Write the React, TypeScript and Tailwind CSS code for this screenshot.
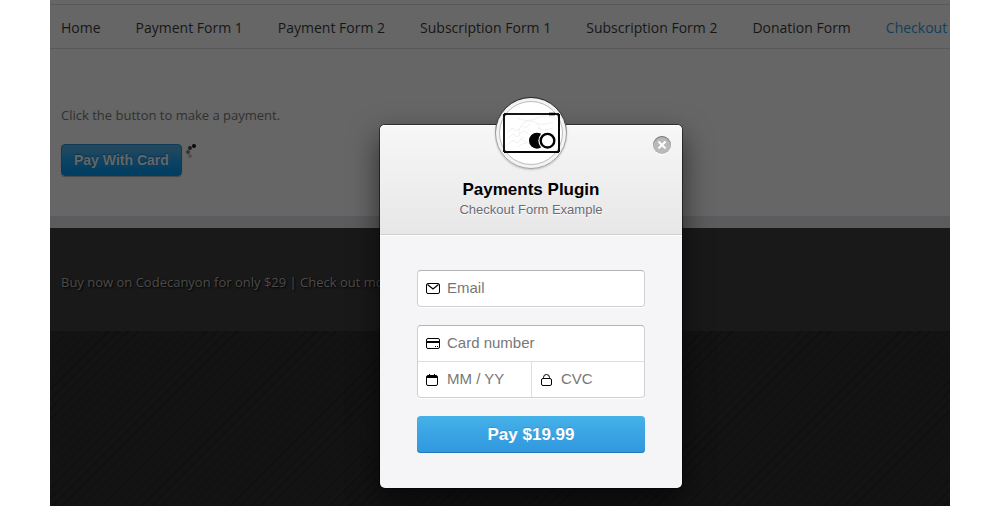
import type { ReactNode } from "react";

const links = [
  "Home",
  "Payment Form 1",
  "Payment Form 2",
  "Subscription Form 1",
  "Subscription Form 2",
  "Donation Form",
  "Checkout",
];

function Spinner() {
  return (
    <svg width="12" height="16" viewBox="0 0 12 16" aria-hidden="true">
      <circle cx="8" cy="2" r="2" fill="#080808" />
      <circle cx="4" cy="4" r="2" fill="#1f1f1f" />
      <circle cx="2" cy="8" r="2" fill="#353535" />
      <circle cx="4" cy="12" r="2" fill="#505050" />
    </svg>
  );
}

function Logo() {
  return (
    <svg width="72" height="72" viewBox="0 0 72 72" className="block" aria-hidden="true">
      <defs>
        <linearGradient id="rim" x1="0" y1="0" x2="0" y2="1">
          <stop offset="0" stopColor="#222" />
          <stop offset="0.35" stopColor="#444" />
          <stop offset="0.5" stopColor="#999" />
          <stop offset="1" stopColor="#a0a0a0" />
        </linearGradient>
        <clipPath id="disc">
          <circle cx="36" cy="36" r="31" />
        </clipPath>
      </defs>
      <circle cx="36" cy="36" r="35.500" fill="#f3f3f3" stroke="url(#rim)" />
      <circle cx="36" cy="36" r="31.500" fill="#fff" stroke="#bdbdbd" />
      <g clipPath="url(#disc)" fill="none">
        <path
          d="M12 36l5-5 4 3 6-5 4 2 5-5M12 42l6-5 4 3 6-6 5 2M12 48l6-5 4 3 7-6M22 21q10 5 20 0t18 1M23 50q4-4 9-4M42 26q6 3 16-1M43 31q6 4 15 0"
          stroke="#f0f0f0"
        />
        <circle cx="35" cy="35" r="11" stroke="#f2f2f2" />
      </g>
      <g fill="none">
        <path d="M9 17h55" stroke="#161616" strokeWidth="2" />
        <path d="M9 55h55" stroke="#050505" strokeWidth="2" />
        <path d="M9 17v38" stroke="#161616" strokeWidth="2" />
        <path d="M64 17v38" stroke="#080808" strokeWidth="2" />
        <path d="M9 17h3l-3 3zM64 17v3l-3-3zM9 55v-3l3 3zM64 55v-3l-3 3z" fill="#111" />
        <path d="M54 17h6" stroke="#000" strokeWidth="2.600" />
        <circle cx="42" cy="43.700" r="8" fill="#000" />
        <circle cx="52.500" cy="43.700" r="9.200" fill="#fff" />
        <circle cx="52.500" cy="43.700" r="6.800" stroke="#000" strokeWidth="2.400" />
      </g>
    </svg>
  );
}

function MailIcon() {
  return (
    <svg width="14" height="12" viewBox="0 0 14 12" fill="none" stroke="#000" aria-hidden="true">
      <rect x="0.500" y="0.500" width="13" height="10" rx="1.500" />
      <path d="M1.500 1.500L7 6l5.500-4.500" strokeWidth="1.200" />
    </svg>
  );
}

function CardIcon() {
  return (
    <svg width="14" height="12" viewBox="0 0 14 12" fill="none" stroke="#000" aria-hidden="true">
      <rect x="0.500" y="0.500" width="13" height="10" rx="1.500" />
      <path d="M0 4h14" strokeWidth="2" />
      <path d="M9 8.500h1M11 8.500h1" />
    </svg>
  );
}

function CalendarIcon() {
  return (
    <svg width="14" height="12" viewBox="0 0 14 12" fill="none" stroke="#000" aria-hidden="true">
      <rect x="0.500" y="1.500" width="11" height="10" rx="1.500" />
      <path d="M1 3h10" strokeWidth="2" />
      <path d="M3.500 0v3M8.500 0v3" />
    </svg>
  );
}

function LockIcon() {
  return (
    <svg width="14" height="12" viewBox="0 0 14 12" fill="none" stroke="#000" aria-hidden="true">
      <rect x="1.500" y="4.500" width="10" height="7" rx="1.500" />
      <path d="M3.500 4.500V3.500a3 3 0 0 1 6 0v1" />
    </svg>
  );
}

function Field({ icon, label, className = "" }: { icon: ReactNode; label: string; className?: string }) {
  return (
    <label className={`flex min-w-0 items-center gap-[7px] pl-2 ${className}`}>
      <span className="shrink-0">{icon}</span>
      <input
        type="text"
        aria-label={label}
        placeholder={label}
        className="w-full min-w-0 bg-transparent pb-0.5 text-[15px] leading-5 text-black outline-none placeholder:text-[#777]"
      />
    </label>
  );
}

function CheckoutDialog() {
  return (
    <section
      role="dialog"
      aria-labelledby="dialog-title"
      className="relative w-[302px] rounded-[5px] bg-[#f5f5f7] pb-[35px] font-['Liberation_Sans',Arial,sans-serif] shadow-[0_0_0_1px_rgba(0,0,0,0.5),0_12px_30px_rgba(0,0,0,0.6)]"
    >
      <div className="absolute -top-7 left-1/2 -translate-x-1/2 rounded-full shadow-[0_1px_2px_rgba(0,0,0,0.2)]">
        <Logo />
      </div>
      <button
        type="button"
        aria-label="Close"
        className="absolute top-[11px] right-[11px] flex size-[18px] items-center justify-center rounded-full bg-[#b9b9b9] shadow-[inset_0_1px_1px_rgba(0,0,0,0.4),0_1px_0_#fff]"
      >
        <svg width="8" height="8" viewBox="0 0 8 8" stroke="#fff" strokeWidth="2" aria-hidden="true">
          <path d="M0.500 0.500l7 7M7.500 0.500l-7 7" />
        </svg>
      </button>
      <header className="rounded-t-[5px] border-b border-[#cfcfcf] bg-linear-to-b from-[#f7f7f8] to-[#e7e7e7] pt-[54px] pb-[15px] text-center shadow-[inset_0_1px_0_#fff,0_1px_0_#fff]">
        <h1 id="dialog-title" className="text-[17px] leading-[22px] font-bold text-black">
          Payments Plugin
        </h1>
        <h2 className="text-[13px] leading-[18px] text-[#6b6b76] [text-shadow:0_1px_0_#fff]">Checkout Form Example</h2>
      </header>
      <form className="px-[37px] pt-[35px]" onSubmit={(e) => e.preventDefault()}>
        <div className="rounded-[4px] border border-[#cfcfd0] border-t-[#b4b4b5] bg-white shadow-[0_1px_0_#fff]">
          <Field icon={<MailIcon />} label="Email" className="h-[35px]" />
        </div>
        <div className="mt-[18px] rounded-[4px] border border-[#cfcfd0] border-t-[#b4b4b5] bg-white shadow-[0_1px_0_#fff]">
          <Field icon={<CardIcon />} label="Card number" className="h-9 border-b border-[#dedede]" />
          <div className="grid grid-cols-[114px_1fr]">
            <Field icon={<CalendarIcon />} label="MM / YY" className="h-[35px] border-r border-[#dedede]" />
            <Field icon={<LockIcon />} label="CVC" className="h-[35px]" />
          </div>
        </div>
        <button
          type="submit"
          className="mt-[18px] block h-[37px] w-full rounded-[4px] bg-linear-to-b from-[#45b1e8] to-[#3097de] text-[17px] font-bold text-white shadow-[inset_0_-1px_0_#2479bd] [text-shadow:0_-1px_0_rgba(0,0,0,0.15)]"
        >
          Pay $19.99
        </button>
      </form>
    </section>
  );
}

export default function App() {
  return (
    <div className="min-h-screen bg-white px-[50px]">
      <div className="relative flex min-h-screen flex-col overflow-hidden bg-[#666]">
        <nav className="mt-1 flex h-[45px] items-center gap-[35px] border-y border-[#585858] pt-0.5 pl-[11px] font-['Open_Sans',sans-serif] text-sm whitespace-nowrap">
          {links.map((link) => (
            <a key={link} href="#" className={link === "Checkout" ? "text-[#123f5a]" : "text-[#161616]"}>
              {link}
            </a>
          ))}
        </nav>
        <main className="border-b-12 border-[#5c5c5e] px-[11px] pt-14 pb-10 font-['Open_Sans',sans-serif] text-[13px] leading-5 text-[#303030]">
          <p>Click the button to make a payment.</p>
          <div className="mt-[19px] flex items-start gap-1">
            <button
              type="button"
              className="h-8 rounded-[4px] border border-[#0d3a58] bg-linear-to-b from-[#26485b] via-[#0c4466] to-[#003c60] px-3 font-['Liberation_Sans',Arial,sans-serif] text-sm font-bold text-[#666] shadow-[0_1px_1px_rgba(0,0,0,0.3)] [text-shadow:0_-1px_1px_rgba(0,0,0,0.3)]"
            >
              Pay With Card
            </button>
            <Spinner />
          </div>
        </main>
        <footer className="bg-[#191919] px-[11px] pt-11 pb-[39px] font-['Open_Sans',sans-serif] text-[13px] leading-5 whitespace-nowrap text-[#4b4b4b] [text-shadow:1px_1px_2px_#000]">
          Buy now on Codecanyon for only $29 | Check out more
        </footer>
        <div className="flex-1 bg-[#131313] bg-[repeating-linear-gradient(135deg,transparent_0_6px,#0f0f0f_6px_7px)]" />
        <div className="absolute inset-0 flex items-start justify-center pt-[125px] pl-[62px]">
          <CheckoutDialog />
        </div>
      </div>
    </div>
  );
}
